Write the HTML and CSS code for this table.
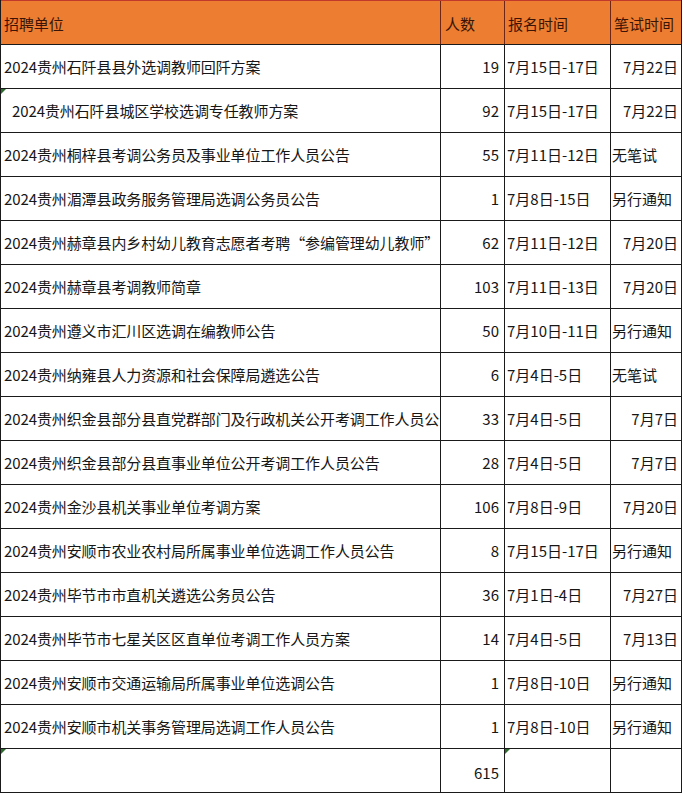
FILE: index.html
```html
<!DOCTYPE html>
<html lang="zh-CN">
<head>
<meta charset="utf-8">
<link rel="stylesheet" href="styles.css">
</head>
<body>
<div class="sheet">
  <div class="row head">
    <div class="c name">招聘单位</div>
    <div class="c">人数</div>
    <div class="c date">报名时间</div>
    <div class="c">笔试时间</div>
  </div>
  <div class="row"><div class="c name">2024贵州石阡县县外选调教师回阡方案</div><div class="c num">19</div><div class="c date">7月15日-17日</div><div class="c exam r">7月22日</div></div>
  <div class="row"><div class="c name indent mark">2024贵州石阡县城区学校选调专任教师方案</div><div class="c num">92</div><div class="c date">7月15日-17日</div><div class="c exam r">7月22日</div></div>
  <div class="row"><div class="c name">2024贵州桐梓县考调公务员及事业单位工作人员公告</div><div class="c num">55</div><div class="c date">7月11日-12日</div><div class="c exam">无笔试</div></div>
  <div class="row"><div class="c name">2024贵州湄潭县政务服务管理局选调公务员公告</div><div class="c num">1</div><div class="c date">7月8日-15日</div><div class="c exam">另行通知</div></div>
  <div class="row"><div class="c name">2024贵州赫章县内乡村幼儿教育志愿者考聘“参编管理幼儿教师”</div><div class="c num">62</div><div class="c date">7月11日-12日</div><div class="c exam r">7月20日</div></div>
  <div class="row"><div class="c name">2024贵州赫章县考调教师简章</div><div class="c num">103</div><div class="c date">7月11日-13日</div><div class="c exam r">7月20日</div></div>
  <div class="row"><div class="c name">2024贵州遵义市汇川区选调在编教师公告</div><div class="c num">50</div><div class="c date">7月10日-11日</div><div class="c exam">另行通知</div></div>
  <div class="row"><div class="c name">2024贵州纳雍县人力资源和社会保障局遴选公告</div><div class="c num">6</div><div class="c date">7月4日-5日</div><div class="c exam">无笔试</div></div>
  <div class="row"><div class="c name">2024贵州织金县部分县直党群部门及行政机关公开考调工作人员公告</div><div class="c num">33</div><div class="c date">7月4日-5日</div><div class="c exam r">7月7日</div></div>
  <div class="row"><div class="c name">2024贵州织金县部分县直事业单位公开考调工作人员公告</div><div class="c num">28</div><div class="c date">7月4日-5日</div><div class="c exam r">7月7日</div></div>
  <div class="row"><div class="c name">2024贵州金沙县机关事业单位考调方案</div><div class="c num">106</div><div class="c date">7月8日-9日</div><div class="c exam r">7月20日</div></div>
  <div class="row"><div class="c name">2024贵州安顺市农业农村局所属事业单位选调工作人员公告</div><div class="c num">8</div><div class="c date">7月15日-17日</div><div class="c exam">另行通知</div></div>
  <div class="row"><div class="c name">2024贵州毕节市市直机关遴选公务员公告</div><div class="c num">36</div><div class="c date">7月1日-4日</div><div class="c exam r">7月27日</div></div>
  <div class="row"><div class="c name">2024贵州毕节市七星关区区直单位考调工作人员方案</div><div class="c num">14</div><div class="c date">7月4日-5日</div><div class="c exam r">7月13日</div></div>
  <div class="row"><div class="c name">2024贵州安顺市交通运输局所属事业单位选调公告</div><div class="c num">1</div><div class="c date">7月8日-10日</div><div class="c exam">另行通知</div></div>
  <div class="row"><div class="c name">2024贵州安顺市机关事务管理局选调工作人员公告</div><div class="c num">1</div><div class="c date">7月8日-10日</div><div class="c exam">另行通知</div></div>
  <div class="row total"><div class="c name mark"></div><div class="c num">615</div><div class="c date mark"></div><div class="c exam"></div></div>
</div>
</body>
</html>
```

FILE: styles.css
```css
html, body {
  margin: 0;
  padding: 0;
  background: #ffffff;
}

.sheet {
  width: 682px;
  box-sizing: border-box;
  display: flex;
  flex-direction: column;
  gap: 1px;
  background: #1a1a1a;
  padding: 0 1px 1px 1px;
  font-family: "Noto Sans CJK SC", "Noto Sans", sans-serif;
  font-size: 15px;
  color: #161616;
}

.row {
  display: grid;
  grid-template-columns: 439px 63px 105px 70px;
  gap: 1px;
  height: 43px;
  background: #1a1a1a;
}

.c {
  background: #ffffff;
  display: flex;
  align-items: center;
  padding: 0 3px 1px 3px;
  white-space: nowrap;
  overflow: hidden;
  position: relative;
  line-height: 1;
}

.name {
  letter-spacing: -0.1px;
}

.row.head {
  background: #6e2616;
  border-top: 1px solid #c0392b;
}

.row.head .c {
  background: #ec7d31;
  color: #3a1406;
  padding-top: 1px;
  padding-bottom: 0;
  padding-left: 3px;
}

.row.head .c:nth-child(2) {
  padding-left: 4px;
}

.name.indent {
  padding-left: 11px;
}

.num {
  justify-content: flex-end;
  padding-right: 5px;
}

.date {
  padding-left: 2px;
}

.exam {
  padding-left: 1px;
}

.exam.r {
  justify-content: flex-end;
  padding-right: 3px;
}

.total .c {
  padding-top: 3px;
  padding-bottom: 0;
}

.mark::before {
  content: "";
  position: absolute;
  left: 0;
  top: 0;
  width: 0;
  height: 0;
  border-top: 5px solid #2e6b2e;
  border-right: 5px solid transparent;
}
```
